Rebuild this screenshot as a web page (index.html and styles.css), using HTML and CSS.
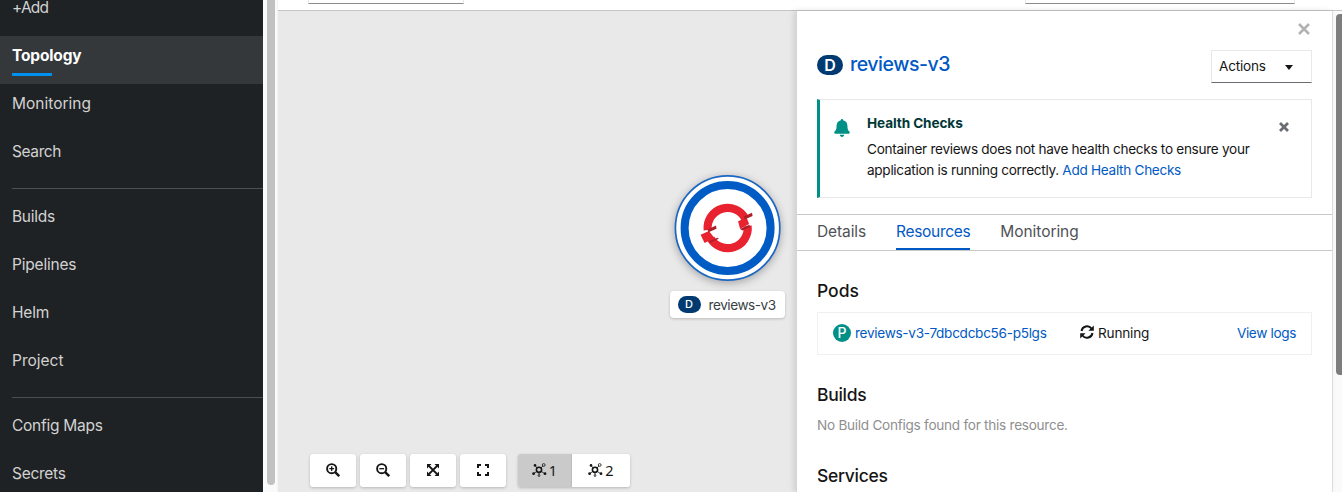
FILE: index.html
```html
<!DOCTYPE html>
<html lang="en">
<head>
<meta charset="utf-8">
<title>Topology</title>
<link rel="stylesheet" href="styles.css">
</head>
<body>
<div class="app">
  <nav class="nav">
    <a class="nav-item"><span class="t-add">+Add</span></a>
    <a class="nav-item current"><span class="t-topology">Topology</span></a>
    <a class="nav-item"><span class="t-monitoring">Monitoring</span></a>
    <a class="nav-item"><span class="t-search">Search</span></a>
    <hr class="nav-rule">
    <a class="nav-item"><span class="t-builds">Builds</span></a>
    <a class="nav-item"><span class="t-pipelines">Pipelines</span></a>
    <a class="nav-item"><span class="t-helm">Helm</span></a>
    <a class="nav-item"><span class="t-project">Project</span></a>
    <hr class="nav-rule">
    <a class="nav-item"><span class="t-config">Config Maps</span></a>
    <a class="nav-item last"><span class="t-secrets">Secrets</span></a>
  </nav>
  <div class="nav-scroll"><div class="nav-thumb"></div></div>
  <main class="main">
    <div class="filters"><div class="select-edge"></div><div class="search-edge"></div></div>
    <div class="content">
      <section class="canvas">
        <div class="node">
          <svg class="node-ring" width="126" height="126" viewBox="-.6 0 126 126">
            <circle cx="63" cy="63" r="52.2" fill="#fff" stroke="#1a66c4" stroke-width="1.7"/>
            <circle cx="63" cy="63" r="43" fill="#fff" stroke="#005cc4" stroke-width="8"/>
            <g fill="none" stroke="#e8222f" stroke-width="8.2">
              <path d="M43.100 65A20 20 0 0 1 80.800 53.800"/>
              <path d="M83 61A20 20 0 0 1 46 73.500"/>
            </g>
            <path d="M73.500 56.300l8.500-3.800 2.500 6.500-9 5zM36 69.700l8.300-3.700 5.500 7-9.800 5z" fill="#e8222f"/>
            <path d="M79.200 51.500l8.200-3.800.6 3.300-8 3.400zM75.500 63.900l9.200-4.100 1 2.200-8 3.600zM42.900 64.500l8.500-3.900.5 3.200-8 3.500zM44.300 76.600l8.700-3.900 1.200 1-9 4.200z" fill="#ae1f29"/>
          </svg>
          <div class="node-label"><span class="badge badge-sm">D</span><span class="t-node">reviews-v3</span></div>
        </div>
        <div class="controls">
          <button class="tool"><svg width="14" height="14" viewBox="0 0 14 14"><circle cx="5.7" cy="5.7" r="4.6" fill="none" stroke="#151515" stroke-width="1.9"/><path d="M9.2 9.2l4 4" stroke="#151515" stroke-width="2.4"/><path d="M3.3 5.7h4.8M5.7 3.3v4.8" stroke="#151515" stroke-width="1.3"/></svg></button>
          <button class="tool"><svg width="14" height="14" viewBox="0 0 14 14"><circle cx="5.7" cy="5.7" r="4.6" fill="none" stroke="#151515" stroke-width="1.9"/><path d="M9.2 9.2l4 4" stroke="#151515" stroke-width="2.4"/><path d="M3.3 5.7h4.8" stroke="#151515" stroke-width="1.3"/></svg></button>
          <button class="tool"><svg width="14" height="14" viewBox="0 0 14 14"><path d="M3 3l8 8M11 3l-8 8" stroke="#151515" stroke-width="1.8"/><path d="M1 1h4.5L1 5.500zM13 1v4.500L8.500 1zM1 13V8.500L5.500 13zM13 13H8.500L13 8.500z" fill="#151515"/></svg></button>
          <button class="tool"><svg width="14" height="14" viewBox="0 0 14 14"><path d="M2 5V2h3M9 2h3v3M12 9v3H9M5 12H2V9" fill="none" stroke="#151515" stroke-width="2"/></svg></button>
          <div class="layouts">
            <button class="layout active"><svg width="15" height="14" viewBox="0 0 15 14"><use href="#topology"/></svg><span>1</span></button>
            <button class="layout"><svg width="15" height="14" viewBox="0 0 15 14"><use href="#topology"/></svg><span>2</span></button>
          </div>
        </div>
      </section>
      <aside class="panel">
        <div class="panel-close"><svg width="12" height="12" viewBox="0 0 12 12"><path d="M1 1l10 10M11 1L1 11" stroke="#b2b2b2" stroke-width="2.5"/></svg></div>
        <header class="heading">
          <span class="badge badge-lg">D</span><h1><span class="t-title">reviews-v3</span></h1>
          <button class="actions"><span class="t-actions">Actions</span><i class="caret"></i></button>
        </header>
        <div class="alert">
          <svg class="bell" width="16" height="18" viewBox="0 0 16 18"><path d="M8 0c.7 0 1.100.5 1.100 1.200C11.700 1.700 13.400 3.900 13.400 6.400c0 4 1 5.200 2 6.200.8.900.3 2.200-1 2.200H1.600c-1.300 0-1.800-1.300-1-2.200 1-1 2-2.200 2-6.200 0-2.500 1.700-4.700 4.300-5.200C6.900.5 7.300 0 8 0zM5.800 15.800h4.400c0 2.800-4.400 2.800-4.400 0z" fill="#009088"/></svg>
          <div class="alert-body">
            <h4><span class="t-health">Health Checks</span></h4>
            <p><span class="t-line">Container reviews does not have health checks to ensure your</span><br><span class="t-line">application is running correctly. <a class="link">Add Health Checks</a></span></p>
          </div>
          <svg class="alert-close" width="10" height="10" viewBox="0 0 10 10"><path d="M1 1l8 8M9 1L1 9" stroke="#6a6e73" stroke-width="2.8"/></svg>
        </div>
        <div class="tabs"><span class="tab"><span class="t-details">Details</span></span><span class="tab selected"><span class="t-resources">Resources</span></span><span class="tab"><span class="t-mon2">Monitoring</span></span></div>
        <div class="resources">
          <h2><span class="t-pods">Pods</span></h2>
          <div class="pod">
            <span class="badge badge-pod">P</span><a class="link t-pod">reviews-v3-7dbcdcbc56-p5lgs</a>
            <span class="status"><svg width="14" height="14" viewBox="0 0 14 14"><path d="M1.500 6A5.600 5.600 0 0 1 11.500 3.500M12.500 8A5.600 5.600 0 0 1 2.500 10.500" fill="none" stroke="#151515" stroke-width="2"/><path d="M13.800.4v5.400H8.400zM.2 13.600V8.200h5.400z" fill="#151515"/></svg><span class="t-running">Running</span></span>
            <a class="link logs"><span class="t-logs">View logs</span></a>
          </div>
          <h2 class="h-builds"><span class="t-hbuilds">Builds</span></h2>
          <p class="muted"><span class="t-none">No Build Configs found for this resource.</span></p>
          <h2 class="h-services"><span class="t-services">Services</span></h2>
        </div>
      </aside>
      <div class="page-scroll"><div class="page-thumb"></div></div>
    </div>
  </main>
</div>
<svg class="defs" width="0" height="0"><defs><g id="topology"><circle cx="7" cy="6.800" r="2.600" fill="none" stroke="#151515" stroke-width="1.600"/><path d="M5.200 5L3 2.500M9 5l2-2.200M5 8.300L2 10.500M9 8.300l3.500 2.200M7 9.500v2.500" stroke="#151515" stroke-width=".8"/><g fill="#151515"><circle cx="3" cy="2.400" r="1.300"/><circle cx="1.600" cy="10.700" r="1.400"/><circle cx="13" cy="10.700" r="1.400"/></g><g fill="none" stroke="#151515" stroke-width=".8"><circle cx="11.700" cy="2" r="1.400"/><circle cx="7" cy="12.600" r=".9"/></g></g></defs></svg>
</body>
</html>
```
FILE: styles.css
```css
* { box-sizing: border-box; }
body { margin: 0; font-family: Inter, "Noto Sans", sans-serif; font-size: 13.6px; color: #151515; background: #fff; overflow: hidden; }
h1, h2, h4, p { margin: 0; font-weight: 400; }
button { font: inherit; color: inherit; border: 0; padding: 0; }
span { white-space: nowrap; }
.app { display: flex; width: 1342px; height: 492px; overflow: hidden; }
.nav { flex: 0 0 263px; background: #1f2224; color: #d2d2d2; font-size: 15.5px; overflow: hidden; }
.nav-item { display: flex; align-items: flex-start; height: 48px; padding: 8px 0 0 12px; line-height: 24px; }
.nav-item:first-child { height: 36px; padding-top: 0; line-height: 16px; }
.nav-item.last { height: 30px; }
.nav-item.current { flex-direction: column; background: #34383a; color: #fff; font-weight: 700; }
.current::after { content: ""; width: 40px; height: 3px; margin-top: 5px; background: #0090f0; }
.nav-rule { height: 1px; margin: 8px 0 8px 12px; border: 0; background: #4b4f52; }
.nav-scroll { flex: 0 0 15px; padding-left: 4px; background: #fafafa; border-right: 1px solid #f3f3f3; }
.nav-thumb { width: 8px; height: 485px; background: #c1c1c1; border-radius: 0 0 4px 4px; }
.main { flex: 1; display: flex; flex-direction: column; min-width: 0; }
.filters { display: flex; height: 11px; padding: 0 47px 0 30px; justify-content: space-between; border-bottom: 1px solid #c4c4c4; }
.select-edge, .search-edge { width: 156px; height: 4px; border: 1px solid #e8e8e8; border-top: 0; border-bottom-color: #8a8d90; }
.search-edge { width: 270px; }
.content { flex: 1; display: flex; min-height: 0; }
.canvas { flex: 0 0 518px; position: relative; background: #e9e9e9; }
.node { position: absolute; left: 386px; top: 154px; width: 126px; display: flex; flex-direction: column; align-items: center; }
.node-ring { display: block; filter: drop-shadow(0 2px 4px rgba(0,0,0,.3)); }
.node-label { display: flex; align-items: center; width: 115px; height: 27px; padding: 0 0 1px 8px; gap: 8px; background: #fff; border-radius: 4px; box-shadow: 0 1px 3px rgba(0,0,0,.2); color: #393f44; }
.t-node { padding-top: 1px; }
.badge { display: flex; align-items: center; justify-content: center; flex: none; background: #003a70; color: #fff; font-weight: 500; }
.badge-sm { width: 23px; height: 17px; border-radius: 9px; font-size: 11px; }
.badge-lg { width: 26px; height: 20px; border-radius: 10px; font-size: 16px; font-weight: 600; }
.badge-pod { width: 18px; height: 18px; border-radius: 9px; background: #009088; font-size: 14px; }
.controls { position: absolute; left: 32px; top: 443px; display: flex; gap: 4px; }
.tool { display: flex; align-items: center; justify-content: center; width: 46px; height: 33px; padding-bottom: 1px; background: #fff; border-radius: 3px; box-shadow: 0 1px 3px rgba(0,0,0,.22); }
.layouts { display: flex; margin-left: 8px; border-radius: 3px; overflow: hidden; box-shadow: 0 1px 3px rgba(0,0,0,.22); }
.layout { display: flex; align-items: center; justify-content: center; gap: 2px; width: 58px; height: 33px; padding-bottom: 1px; background: #fff; font-family: "Noto Sans", sans-serif; font-size: 14.5px; }
.layout svg { margin-bottom: 1px; }
.layout.active { width: 54px; background: #cacaca; border-right: 1px solid #bdbdbd; }
.panel { flex: 0 0 536px; background: #fff; border-left: 1px solid #d6d6d6; box-shadow: -2px 0 6px rgba(0,0,0,.12); position: relative; }
.panel-close { display: flex; justify-content: flex-end; height: 39px; padding: 12px 22px 0 0; }
.heading { display: flex; height: 49px; padding: 0 20px; }
.heading .badge { margin-top: 5px; }
h1 { flex: 1; padding-left: 7px; line-height: 28px; font-size: 19.5px; font-weight: 500; color: #0059c4; }
.actions { display: flex; width: 101px; height: 33px; align-items: center; padding: 0 0 1px 7px; background: #fff; border: 1px solid #e8e8e8; border-bottom-color: #6a6e73; }
.caret { border: solid transparent; border-width: 5px 4.500px 0; border-top-color: #151515; margin: 2px 0 0 19px; }
.alert { display: flex; height: 99px; margin: 0 20px; padding: 0 22px 0 14px; border: 1px solid #e8e8e8; border-left: 3px solid #009088; }
.bell { margin-top: 19px; }
.alert-body { flex: 1; margin-left: 17px; padding-top: 13px; line-height: 21px; }
h4 { font-weight: 700; color: #003737; }
.alert-body p { padding-top: 5px; }
.alert-close { margin-top: 22px; }
.link { color: #0059c4; white-space: nowrap; }
.tabs { display: flex; gap: 30px; height: 37px; margin-top: 16px; padding-left: 20px; border: solid #c8c8c8; border-width: 1px 0; font-size: 15.5px; color: #4f5255; }
.tab { height: 35px; line-height: 33px; }
.tab.selected { color: #0059c4; border-bottom: 2px solid #0059c4; }
.resources { padding: 28px 20px 0; }
h2 { font-size: 17.5px; font-weight: 500; line-height: 24px; }
.pod { display: flex; align-items: center; height: 43px; margin-top: 9px; padding: 0 15px 2px; border: 1px solid #f0f0f0; }
.t-pod { margin-left: 4px; width: 192px; letter-spacing: -.3px; }
.status { display: flex; align-items: center; margin-left: 33px; gap: 4px; }
.status svg { margin-bottom: 2px; }
.logs { margin-left: auto; }
.h-builds { margin-top: 28px; }
.muted { color: #8f8f8f; line-height: 21px; margin-top: 8px; }
.h-services { margin-top: 28px; }
.page-scroll { flex: 1; background: #fafafa; border-left: 1px solid #e2e2e2; padding: 3px 0 0 3px; }
.page-thumb { height: 361px; background: #7d7d7d; border-radius: 4px 0 0 4px; }
.defs { position: absolute; }

/* tracking */
.t-add { letter-spacing: -.8px; }
.t-topology { letter-spacing: -.15px; }
.t-search { letter-spacing: -.4px; }
.t-builds, .t-config, .t-secrets { letter-spacing: -.27px; }
.t-pipelines, .t-helm { letter-spacing: -.2px; }
.t-node { letter-spacing: -.45px; }
.t-title { letter-spacing: -.45px; }
.t-actions, .t-running { letter-spacing: -.2px; }
.t-health { letter-spacing: -.1px; }
.t-line { letter-spacing: -.3px; }
.t-details { letter-spacing: -.1px; }
.t-resources { letter-spacing: -.32px; }
.t-mon2 { letter-spacing: -.05px; }
.t-hbuilds, .t-services, .t-none { letter-spacing: -.27px; }
.t-logs { letter-spacing: -.35px; }
```
